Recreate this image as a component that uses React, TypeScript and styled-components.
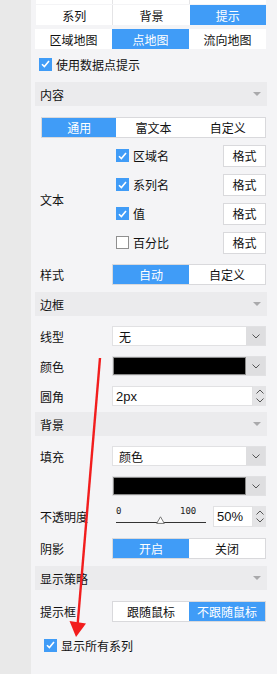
import React from 'react';
import styled, { createGlobalStyle } from 'styled-components';

const BLUE = '#409cf7';
const BORDER = '#d9d9dc';

const GlobalStyle = createGlobalStyle`
  html, body {
    margin: 0;
    padding: 0;
    height: 674px;
    overflow: hidden;
    background: #e9e9e9;
  }
  body {
    font-family: "Noto Sans CJK SC", "Liberation Sans", sans-serif;
    font-size: 12px;
    color: #111;
  }
`;

const Page = styled.div`
  position: relative;
  display: flex;
  height: 674px;
  overflow: hidden;
`;

const SideStrip = styled.div`
  width: 31px;
  flex-shrink: 0;
  background: #e9e9e9;
`;

const Panel = styled.div`
  flex: 1;
  background: #f4f4f6;
  padding: 0 10px 0 4px;
  display: flex;
  flex-direction: column;
`;

const Segmented = styled.div<{ $mt: number; $ml?: number; $h?: number; $bordered?: boolean }>`
  display: flex;
  height: ${({ $h }) => $h ?? 20}px;
  margin-top: ${({ $mt }) => $mt}px;
  margin-left: ${({ $ml }) => $ml ?? 0}px;
  margin-right: 1px;
  box-sizing: border-box;
  border: ${({ $bordered }) => ($bordered ? `1px solid ${BORDER}` : 'none')};
  flex-shrink: 0;
`;

const Seg = styled.div<{ $active?: boolean; $divider?: boolean }>`
  flex: 1;
  display: flex;
  align-items: center;
  justify-content: center;
  background: ${({ $active }) => ($active ? BLUE : '#fff')};
  color: ${({ $active }) => ($active ? '#fff' : '#111')};
  border-left: ${({ $divider }) => ($divider ? '1px solid #e4e4e6' : 'none')};
  white-space: nowrap;
`;

const CheckLine = styled.label<{ $mt: number; $ml: number }>`
  display: flex;
  align-items: center;
  gap: 4px;
  height: 18px;
  margin-top: ${({ $mt }) => $mt}px;
  margin-left: ${({ $ml }) => $ml}px;
  flex-shrink: 0;
`;

const Box = styled.span<{ $checked: boolean }>`
  width: 13px;
  height: 13px;
  box-sizing: border-box;
  display: inline-flex;
  align-items: center;
  justify-content: center;
  background: ${({ $checked }) => ($checked ? BLUE : '#fff')};
  border: ${({ $checked }) => ($checked ? 'none' : '1px solid #8f8f8f')};
  flex-shrink: 0;
`;

const Header = styled.div<{ $mt: number }>`
  height: 24px;
  margin-top: ${({ $mt }) => $mt}px;
  background: #ebebed;
  display: flex;
  align-items: center;
  justify-content: space-between;
  padding: 0 6px 0 5px;
  flex-shrink: 0;
`;

const Caret = styled.span`
  width: 0;
  height: 0;
  border-left: 4px solid transparent;
  border-right: 4px solid transparent;
  border-top: 4px solid #a9a9ab;
`;

const Row = styled.div<{ $mt: number; $h: number }>`
  display: flex;
  align-items: center;
  height: ${({ $h }) => $h}px;
  margin-top: ${({ $mt }) => $mt}px;
  flex-shrink: 0;
`;

const Label = styled.div`
  width: 77px;
  padding-left: 5px;
  box-sizing: border-box;
  flex-shrink: 0;
  white-space: nowrap;
`;

const Control = styled.div`
  flex: 1;
  height: 100%;
  display: flex;
  margin-right: 1px;
`;

const TextList = styled.div`
  flex: 1;
  display: flex;
  flex-direction: column;
  gap: 7px;
  margin-right: 1px;
`;

const TextItem = styled.div`
  display: flex;
  align-items: center;
  justify-content: space-between;
  height: 22px;
  padding-left: 4px;
`;

const ItemCheck = styled.span`
  display: flex;
  align-items: center;
  gap: 4px;
`;

const FormatBtn = styled.div`
  width: 43px;
  height: 22px;
  box-sizing: border-box;
  border: 1px solid ${BORDER};
  background: #fff;
  display: flex;
  align-items: center;
  justify-content: center;
`;

const Select = styled.div`
  flex: 1;
  display: flex;
  box-sizing: border-box;
  border: 1px solid #e1e1e3;
  background: #fff;
`;

const SelectValue = styled.div<{ $swatch?: boolean }>`
  flex: 1;
  display: flex;
  align-items: center;
  padding-left: ${({ $swatch }) => ($swatch ? 0 : 6)}px;
  background: ${({ $swatch }) => ($swatch ? '#000' : '#fff')};
  border: ${({ $swatch }) => ($swatch ? '1px solid #8a8a8a' : 'none')};
`;

const SelectArrow = styled.div`
  width: 19px;
  background: #dedee0;
  display: flex;
  align-items: center;
  justify-content: center;
`;

const NumberInput = styled.div<{ $w?: number }>`
  display: flex;
  ${({ $w }) => ($w ? `width: ${$w}px;` : 'flex: 1;')}
  height: 100%;
`;

const NumberValue = styled.div`
  flex: 1;
  display: flex;
  align-items: center;
  padding-left: 3px;
  background: #fff;
  border: 1px solid #e1e1e3;
  font-family: "Liberation Sans", Arial, sans-serif;
  font-size: 13px;
`;

const Spinner = styled.div`
  width: 13px;
  background: #e4e4e6;
  display: flex;
  flex-direction: column;
  align-items: center;
  justify-content: space-evenly;
`;

const SliderWrap = styled.div`
  position: relative;
  width: 90px;
  margin-left: 4px;
  margin-right: 7px;
  height: 100%;
`;

const SliderNum = styled.span<{ $left: number }>`
  position: absolute;
  top: 0px;
  left: ${({ $left }) => $left}px;
  font-family: "DejaVu Sans Mono", "Liberation Mono", monospace;
  font-size: 9px;
  line-height: 10px;
  color: #222;
`;

const SliderTrack = styled.div`
  position: absolute;
  left: 0;
  right: 0;
  top: 16px;
  height: 1px;
  background: #333;
`;

const Thumb = styled.svg`
  position: absolute;
  left: 40px;
  top: 10px;
`;

const Overlay = styled.svg`
  position: absolute;
  left: 0;
  top: 0;
  pointer-events: none;
`;

const Check = () => (
  <svg width="9" height="8" viewBox="0 0 9 8">
    <path d="M1 4.2 L3.4 6.6 L8 1" fill="none" stroke="#fff" strokeWidth="1.6" />
  </svg>
);

const Chevron = ({ up }: { up?: boolean }) => (
  <svg width="8" height="5" viewBox="0 0 8 5">
    <path d={up ? 'M0.5 4.5 L4 1 L7.5 4.5' : 'M0.5 0.5 L4 4 L7.5 0.5'} fill="none" stroke="#555" strokeWidth="1" />
  </svg>
);

const CheckBox = ({ checked }: { checked: boolean }) => (
  <Box $checked={checked}>{checked && <Check />}</Box>
);

const textItems = [
  { name: '区域名', checked: true },
  { name: '系列名', checked: true },
  { name: '值', checked: true },
  { name: '百分比', checked: false },
];

export default function App() {
  return (
    <Page>
      <GlobalStyle />
      <SideStrip />
      <Panel>
        <Segmented $mt={-16} $ml={1}>
          <Seg />
          <Seg $divider />
          <Seg $divider />
        </Segmented>
        <Segmented $mt={1} $ml={1}>
          <Seg>系列</Seg>
          <Seg $divider>背景</Seg>
          <Seg $active>提示</Seg>
        </Segmented>
        <Segmented $mt={4}>
          <Seg>区域地图</Seg>
          <Seg $active>点地图</Seg>
          <Seg>流向地图</Seg>
        </Segmented>
        <CheckLine $mt={6} $ml={4}>
          <CheckBox checked />
          <span>使用数据点提示</span>
        </CheckLine>

        <Header $mt={9}>
          <span>内容</span>
          <Caret />
        </Header>
        <Segmented $mt={11} $ml={6} $h={21} $bordered>
          <Seg $active>通用</Seg>
          <Seg>富文本</Seg>
          <Seg>自定义</Seg>
        </Segmented>
        <Row $mt={6} $h={110}>
          <Label>文本</Label>
          <TextList>
            {textItems.map((item) => (
              <TextItem key={item.name}>
                <ItemCheck>
                  <CheckBox checked={item.checked} />
                  <span>{item.name}</span>
                </ItemCheck>
                <FormatBtn>格式</FormatBtn>
              </TextItem>
            ))}
          </TextList>
        </Row>
        <Row $mt={10} $h={21}>
          <Label>样式</Label>
          <Control>
            <Segmented $mt={0} $h={21} $bordered style={{ flex: 1, marginRight: 0 }}>
              <Seg $active>自动</Seg>
              <Seg>自定义</Seg>
            </Segmented>
          </Control>
        </Row>

        <Header $mt={7}>
          <span>边框</span>
          <Caret />
        </Header>
        <Row $mt={10} $h={20}>
          <Label>线型</Label>
          <Control>
            <Select>
              <SelectValue>无</SelectValue>
              <SelectArrow><Chevron /></SelectArrow>
            </Select>
          </Control>
        </Row>
        <Row $mt={10} $h={20}>
          <Label>颜色</Label>
          <Control>
            <Select>
              <SelectValue $swatch />
              <SelectArrow><Chevron /></SelectArrow>
            </Select>
          </Control>
        </Row>
        <Row $mt={10} $h={20}>
          <Label>圆角</Label>
          <Control>
            <NumberInput>
              <NumberValue>2px</NumberValue>
              <Spinner><Chevron up /><Chevron /></Spinner>
            </NumberInput>
          </Control>
        </Row>

        <Header $mt={6}>
          <span>背景</span>
          <Caret />
        </Header>
        <Row $mt={10} $h={20}>
          <Label>填充</Label>
          <Control>
            <Select>
              <SelectValue>颜色</SelectValue>
              <SelectArrow><Chevron /></SelectArrow>
            </Select>
          </Control>
        </Row>
        <Row $mt={10} $h={20}>
          <Label />
          <Control>
            <Select>
              <SelectValue $swatch />
              <SelectArrow><Chevron /></SelectArrow>
            </Select>
          </Control>
        </Row>
        <Row $mt={10} $h={21}>
          <Label>不透明度</Label>
          <Control>
            <SliderWrap>
              <SliderNum $left={0}>0</SliderNum>
              <SliderNum $left={64}>100</SliderNum>
              <SliderTrack />
              <Thumb width="9" height="8" viewBox="0 0 9 8">
                <path d="M4.5 0.8 L8.3 7.4 L0.7 7.4 Z" fill="#fff" stroke="#777" strokeWidth="1" />
              </Thumb>
            </SliderWrap>
            <NumberInput $w={53}>
              <NumberValue>50%</NumberValue>
              <Spinner><Chevron up /><Chevron /></Spinner>
            </NumberInput>
          </Control>
        </Row>
        <Row $mt={11} $h={21}>
          <Label>阴影</Label>
          <Control>
            <Segmented $mt={0} $h={21} $bordered style={{ flex: 1, marginRight: 0 }}>
              <Seg $active>开启</Seg>
              <Seg>关闭</Seg>
            </Segmented>
          </Control>
        </Row>

        <Header $mt={7}>
          <span>显示策略</span>
          <Caret />
        </Header>
        <Row $mt={11} $h={21}>
          <Label>提示框</Label>
          <Control>
            <Segmented $mt={0} $h={21} $bordered style={{ flex: 1, marginRight: 0 }}>
              <Seg>跟随鼠标</Seg>
              <Seg $active>不跟随鼠标</Seg>
            </Segmented>
          </Control>
        </Row>
        <CheckLine $mt={14} $ml={9}>
          <CheckBox checked />
          <span>显示所有系列</span>
        </CheckLine>
      </Panel>

      <Overlay width="277" height="674" viewBox="0 0 277 674">
        <line x1="100" y1="358" x2="77.5" y2="626" stroke="#f21d1d" strokeWidth="2.4" />
        <polygon points="69.5,621 86,623.5 76,637" fill="#f21d1d" />
      </Overlay>
    </Page>
  );
}
